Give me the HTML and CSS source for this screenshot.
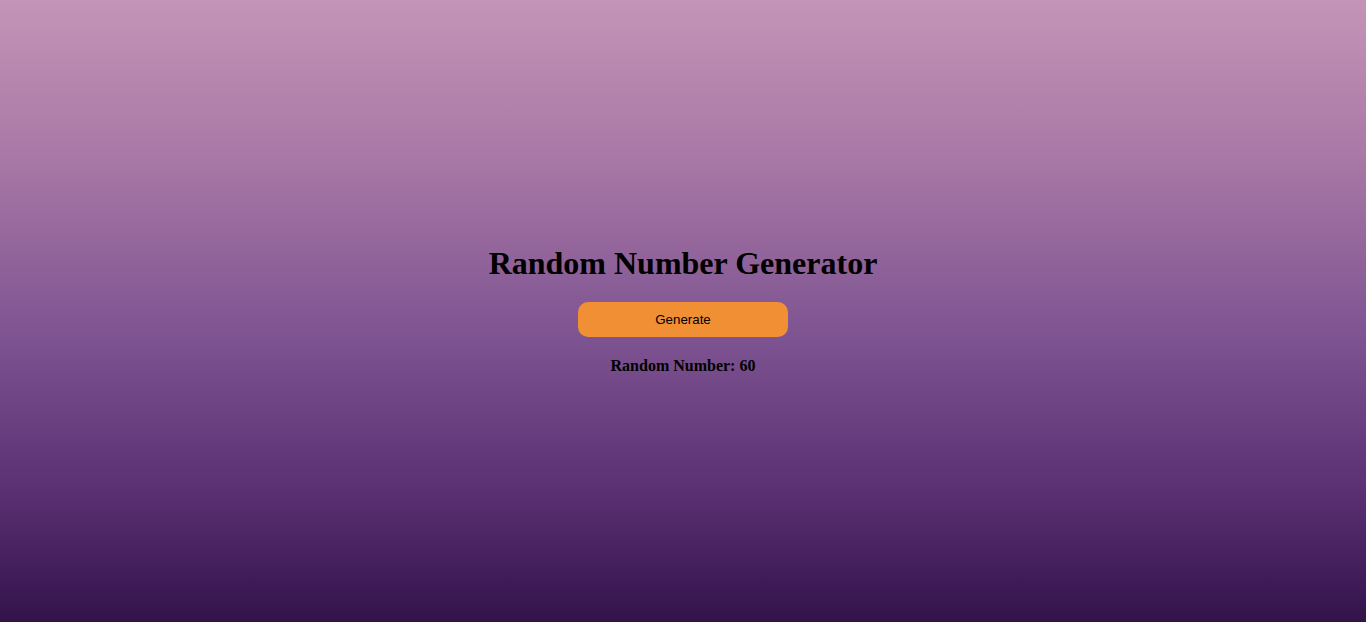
FILE: index.html
```html
<!DOCTYPE html>
<html lang="en">
<head>
<meta charset="utf-8">
<title>Random Number Generator</title>
<link rel="stylesheet" href="styles.css">
</head>
<body>
<main class="app">
  <h1 class="title">Random Number Generator</h1>
  <button class="generate" type="button">Generate</button>
  <p class="result">Random Number: 60</p>
</main>
</body>
</html>
```
FILE: styles.css
```css
html, body {
  margin: 0;
  padding: 0;
  height: 100%;
}
body {
  font-family: "Liberation Serif", "Times New Roman", serif;
  background: linear-gradient(to bottom, #c494b7 0%, #a978a6 25%, #7c5290 55%, #5c3175 78%, #33134a 100%);
  color: #000;
}
.app {
  box-sizing: border-box;
  height: 100vh;
  padding-bottom: 2px;
  display: flex;
  flex-direction: column;
  align-items: center;
  justify-content: center;
  gap: 20px;
}
.title {
  margin: 0;
  font-size: 32px;
  font-weight: bold;
}
.generate {
  width: 210px;
  padding: 10px 0;
  border: none;
  border-radius: 10px;
  background: #f08f33;
  color: #000;
  font-family: "Liberation Sans", Arial, sans-serif;
  font-size: 13.33px;
  cursor: pointer;
}
.result {
  margin: 0;
  font-size: 16px;
  font-weight: bold;
}
```
